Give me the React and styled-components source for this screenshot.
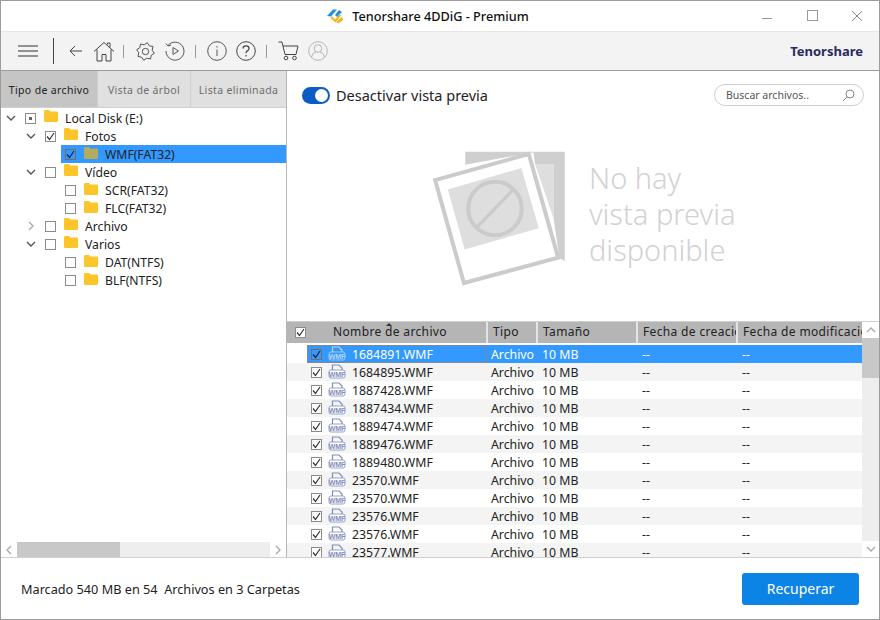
import styled, { createGlobalStyle } from 'styled-components';

const FONT = '"Noto Sans", "Open Sans", sans-serif';

const treeItems = [
  { label: 'Local Disk (E:)', level: 0, arrow: 'down', check: 'partial' },
  { label: 'Fotos', level: 1, arrow: 'down', check: 'on' },
  { label: 'WMF(FAT32)', level: 2, check: 'on', selected: true },
  { label: 'Vídeo', level: 1, arrow: 'down' },
  { label: 'SCR(FAT32)', level: 2 },
  { label: 'FLC(FAT32)', level: 2 },
  { label: 'Archivo', level: 1, arrow: 'right' },
  { label: 'Varios', level: 1, arrow: 'down' },
  { label: 'DAT(NTFS)', level: 2 },
  { label: 'BLF(NTFS)', level: 2 },
];

const files = [
  '1684891.WMF', '1684895.WMF', '1887428.WMF', '1887434.WMF', '1889474.WMF', '1889476.WMF',
  '1889480.WMF', '23570.WMF', '23570.WMF', '23576.WMF', '23576.WMF', '23577.WMF',
];

function Logo() {
  return (
    <svg width="18" height="18" viewBox="0 0 18 18" fill="none">
      <path d="M1 9 L7 2.5 L11 2.5 L5 9.5 Z" fill="#1f8fe0" />
      <path d="M9 8 L13 3 L16 5 L11 10 Z" fill="#1f8fe0" />
      <path d="M6 9 L9 12.5 L13 8 L15.5 8 L9.5 15.5 L4.5 11 Z" fill="#f7b21a" />
      <path d="M10 15.5 L16 9.5 L17 13 L13 16 Z" fill="#f7b21a" />
    </svg>
  );
}

function Icon({ w = 20, h = 20, box, color = '#444', children }) {
  return (
    <svg width={w} height={h} viewBox={box || `0 0 ${w} ${h}`} fill="none" stroke={color} strokeWidth="1">
      {children}
    </svg>
  );
}

function Gear() {
  // teeth drawn as one outline around the hub
  const pts = [];
  for (let i = 0; i < 16; i++) {
    const a = (i * Math.PI) / 8 + Math.PI / 16;
    const r = i % 2 === 0 ? 9 : 6.8;
    pts.push(`${(9.5 + r * Math.cos(a)).toFixed(1)},${(9.5 + r * Math.sin(a)).toFixed(1)}`);
  }
  return (
    <Icon w={19} h={19} color="#555">
      <polygon points={pts.join(' ')} strokeLinejoin="round" />
      <circle cx="9.5" cy="9.5" r="3.2" />
    </Icon>
  );
}

function FolderIcon({ dim }) {
  const color = dim ? '#b3ab5e' : '#fcc62a';
  return (
    <svg width="14" height="12" viewBox="0 0 14 12">
      <path d="M0 1.2 Q0 0 1.2 0 H5 L6.5 1.5 H13 Q14 1.5 14 2.6 V10.8 Q14 12 12.8 12 H1.2 Q0 12 0 10.8 Z" fill={color} />
    </svg>
  );
}

function Chevron({ dir, color = '#555' }) {
  const d = { down: 'M1 1 L5 5 L9 1', right: 'M1 1 L5 5 L1 9', up: 'M1 5 L5 1 L9 5', left: 'M5 1 L1 5 L5 9' }[dir];
  const flat = dir === 'down' || dir === 'up';
  return (
    <svg width={flat ? 10 : 6} height={flat ? 6 : 10} viewBox={flat ? '0 0 10 6' : '0 0 6 10'} fill="none" stroke={color} strokeWidth="1.4">
      <path d={d} />
    </svg>
  );
}

function CheckBox({ state, focus }) {
  return (
    <Box $focus={focus}>
      {state === 'on' && (
        <svg width="9" height="9" viewBox="0 0 9 9" fill="none" stroke={focus ? '#10233f' : '#333'} strokeWidth="1.2">
          <path d="M1 4.5 L3.5 7.5 L8 1" />
        </svg>
      )}
      {state === 'partial' && <PartialDot />}
    </Box>
  );
}

function WmfIcon({ light }) {
  const color = light ? '#b9d6f4' : '#7f8dbd';
  return (
    <svg width="18" height="16" viewBox="0 0 18 16">
      <path d="M4.5 6 V1 H11 L14 4 V6" fill="none" stroke={color} strokeWidth="1.2" />
      <rect x="1" y="6" width="16" height="8" rx="2" fill={light ? 'none' : '#fff'} stroke={color} strokeWidth="0.8" />
      <text x="9" y="12.6" textAnchor="middle" fontSize="7" fontWeight="700" fontFamily="Liberation Sans, sans-serif" fill={color}>WMF</text>
    </svg>
  );
}

function NoPreviewArt() {
  return (
    <svg width="134" height="137" viewBox="40 25 400 410" fill="none">
      <path d="M136 72 V33 H434 V360 L418 352 L400 230 V70 H345 L340 35 Z" fill="#cfcfcf" />
      <path d="M345 70 H400 V232 Z" fill="#dedede" />
      <path d="M46 118 L326 40 L414 350 L132 426 Z" fill="#fff" stroke="#cbcbcb" strokeWidth="12" />
      <path d="M84 146 L304 82 L356 262 L134 326 Z" fill="#dedede" />
      <circle cx="225" cy="203" r="80" stroke="#cbcbcb" strokeWidth="12" />
      <path d="M172 258 L278 148" stroke="#cbcbcb" strokeWidth="10" />
    </svg>
  );
}

export default function App() {
  return (
    <AppWindow>
      <GlobalStyle />
      <TitleBar>
        <TitleGroup>
          <Logo />
          <TitleText>Tenorshare 4DDiG - Premium</TitleText>
        </TitleGroup>
        <WindowButtons>
          <Icon w={12} h={12} color="#999"><path d="M1 8.5 H11" /></Icon>
          <Icon w={12} h={12} color="#999"><rect x="1.5" y="0.5" width="10" height="10" /></Icon>
          <Icon w={12} h={12} color="#888"><path d="M1 1 L11 11 M11 1 L1 11" /></Icon>
        </WindowButtons>
      </TitleBar>

      <Toolbar>
        <ToolGroup>
          <MenuButton>
            <Icon w={20} h={12} color="#333"><path d="M0 1 H20 M0 6 H20 M0 11 H20" /></Icon>
          </MenuButton>
          <TallDivider />
          <ToolSlot $w={16} $ml={14}>
            <Icon w={14} h={12} color="#444"><path d="M13 6 H1 M6 1 L1 6 L6 11" /></Icon>
          </ToolSlot>
          <ToolSlot $w={22} $ml={9}>
            <Icon w={22} h={21} color="#444">
              <path d="M1 10.5 L11 1.5 L21 10.5 M4 8.5 V20 H9 V13.5 H13 V20 H18 V8.5 M14.5 3.5 V2 H17 V6.5" strokeLinejoin="round" />
            </Icon>
          </ToolSlot>
          <ShortDivider $ml={8} />
          <ToolSlot $w={19} $ml={12}><Gear /></ToolSlot>
          <ToolSlot $w={20} $ml={10}>
            <Icon w={20} h={20} color="#555">
              <path d="M3 4.5 A9 9 0 1 1 1 10" />
              <path d="M1 2.5 L3 5 L6 4" />
              <path d="M8 6.5 L13.5 10 L8 13.5 Z" />
            </Icon>
          </ToolSlot>
          <ShortDivider $ml={10} />
          <ToolSlot $w={20} $ml={11}>
            <Icon w={20} h={20} color="#555">
              <circle cx="10" cy="10" r="9.3" />
              <path d="M10 8.5 V15 M10 5 V6.5" />
            </Icon>
          </ToolSlot>
          <ToolSlot $w={20} $ml={9}>
            <Icon w={20} h={20} color="#444">
              <circle cx="10" cy="10" r="9.3" />
              <path d="M7 7.5 Q7 4.8 10 4.8 Q13 4.8 13 7.4 Q13 9 11.3 9.9 Q10 10.6 10 12.3 M10 14 V15.5" strokeWidth="1.2" />
            </Icon>
          </ToolSlot>
          <ShortDivider $ml={10} />
          <ToolSlot $w={21} $ml={11}>
            <Icon w={21} h={20} color="#444">
              <path d="M0.5 1 H4 L7 13.5 H18 L20 5 H5" strokeLinejoin="round" />
              <circle cx="8" cy="17" r="1.8" />
              <circle cx="16.5" cy="17" r="1.8" />
            </Icon>
          </ToolSlot>
          <ToolSlot $w={20} $ml={9}>
            <Icon w={20} h={20} color="#b5b5b5">
              <circle cx="10" cy="10" r="9.3" />
              <circle cx="10" cy="7.5" r="3.8" />
              <path d="M3.5 16 Q4.5 11.5 8 11 M16.5 16 Q15.5 11.5 12 11" />
            </Icon>
          </ToolSlot>
        </ToolGroup>
        <Brand>Tenorshare</Brand>
      </Toolbar>

      <Main>
        <LeftPane>
          <Tabs>
            <Tab $active $w={97}>Tipo de archivo</Tab>
            <Tab $w={93}>Vista de árbol</Tab>
            <Tab $w={95}>Lista eliminada</Tab>
          </Tabs>
          <Tree>
            {treeItems.map(item => (
              <TreeRow key={item.label} $level={item.level} $selected={item.selected}>
                <Arrow>
                  {item.arrow && <Chevron dir={item.arrow} color={item.arrow === 'right' ? '#aaa' : '#555'} />}
                </Arrow>
                <CheckBox state={item.check} focus={item.selected} />
                <FolderSlot $raised={item.level < 2}><FolderIcon dim={item.selected} /></FolderSlot>
                <TreeLabel>{item.label}</TreeLabel>
              </TreeRow>
            ))}
          </Tree>
          <HScrollbar>
            <ScrollButton $w={16}><Chevron dir="left" color="#aaa" /></ScrollButton>
            <HThumb />
            <ScrollButton $w={16}><Chevron dir="right" color="#aaa" /></ScrollButton>
          </HScrollbar>
        </LeftPane>

        <RightPane>
          <PreviewBar>
            <ToggleGroup>
              <Toggle><Knob /></Toggle>
              <ToggleLabel>Desactivar vista previa</ToggleLabel>
            </ToggleGroup>
            <SearchBox>
              <SearchHint>Buscar archivos..</SearchHint>
              <Icon w={13} h={13} color="#888">
                <circle cx="8" cy="5" r="4" />
                <path d="M5 8 L1 12" />
              </Icon>
            </SearchBox>
          </PreviewBar>
          <PreviewArea>
            <NoPreviewArt />
            <NoPreviewText>No hay<br />vista previa<br />disponible</NoPreviewText>
          </PreviewArea>

          <TableWrap>
            <TableBody>
              <HeaderRow>
                <HeaderCheck><CheckBox state="on" /></HeaderCheck>
                <HeaderCell>
                  <NameHeader>Nombre de archivo</NameHeader>
                  <SortMark />
                </HeaderCell>
                <HeaderCell>Tipo</HeaderCell>
                <HeaderCell>Tamaño</HeaderCell>
                <HeaderCell>Fecha de creación</HeaderCell>
                <HeaderCell>Fecha de modificación</HeaderCell>
              </HeaderRow>
              {files.map((name, i) => (
                <FileRow key={i} $selected={i === 0} $odd={i % 2 === 1}>
                  <Gutter />
                  <NameCell $selected={i === 0}>
                    <CheckBox state="on" focus={i === 0} />
                    <WmfIcon light={i === 0} />
                    <FileName>{name}</FileName>
                  </NameCell>
                  <Cell>Archivo</Cell>
                  <Cell $pad={4}>10 MB</Cell>
                  <Cell $pad={4}>--</Cell>
                  <Cell $pad={4}>--</Cell>
                </FileRow>
              ))}
            </TableBody>
            <VScrollbar>
              <ScrollButton $h={16}><Chevron dir="up" color="#aaa" /></ScrollButton>
              <VThumb />
              <VTrack />
              <ScrollButton $h={16}><Chevron dir="down" color="#aaa" /></ScrollButton>
            </VScrollbar>
          </TableWrap>
        </RightPane>
      </Main>

      <Footer>
        <Summary>Marcado 540 MB en 54&nbsp; Archivos en 3 Carpetas</Summary>
        <RecoverButton>Recuperar</RecoverButton>
      </Footer>
    </AppWindow>
  );
}

const GlobalStyle = createGlobalStyle`
  html, body {
    margin: 0;
    background: #fff;
    font-family: ${FONT};
  }
  * { box-sizing: border-box; }
`;

const AppWindow = styled.div`
  width: 880px;
  height: 620px;
  border: 1px solid #9c9c9c;
  display: flex;
  flex-direction: column;
  overflow: hidden;
  color: #222;
`;

const TitleBar = styled.div`
  height: 31px;
  flex: none;
  background: #fff;
  border-bottom: 1px solid #e6e6e6;
  position: relative;
  display: flex;
  align-items: center;
  justify-content: center;
`;

const TitleGroup = styled.div`
  display: flex;
  align-items: center;
  gap: 8px;
  margin-left: -25px;
`;

const TitleText = styled.div`
  font-size: 12.7px;
  font-weight: 500;
  color: #111;
`;

const WindowButtons = styled.div`
  position: absolute;
  right: 16px;
  top: 9px;
  display: flex;
  gap: 33px;
`;

const Toolbar = styled.div`
  height: 39px;
  flex: none;
  background: #f3f3f3;
  border-bottom: 1px solid #9c9c9c;
  display: flex;
  align-items: center;
  justify-content: space-between;
  padding: 0 16px 0 17px;
`;

const ToolGroup = styled.div`
  display: flex;
  align-items: center;
`;

const MenuButton = styled.div`
  width: 20px;
  display: flex;
`;

const TallDivider = styled.div`
  width: 1px;
  height: 26px;
  background: #444;
  margin-left: 15px;
`;

const ShortDivider = styled.div`
  width: 1px;
  height: 13px;
  background: #999;
  margin-left: ${p => p.$ml}px;
`;

const ToolSlot = styled.div`
  width: ${p => p.$w}px;
  margin-left: ${p => p.$ml}px;
  display: flex;
  justify-content: center;
`;

const Brand = styled.div`
  font-size: 13px;
  font-weight: 700;
  color: #2b2a5e;
`;

const Main = styled.div`
  flex: 1;
  min-height: 0;
  display: flex;
`;

const LeftPane = styled.div`
  width: 286px;
  flex: none;
  border-right: 1px solid #b5b5b5;
  border-bottom: 1px solid #d0d0d0;
  display: flex;
  flex-direction: column;
`;

const Tabs = styled.div`
  display: flex;
  height: 37px;
  flex: none;
  border-bottom: 1px solid #d0d0d0;
`;

const Tab = styled.div`
  width: ${p => p.$w}px;
  background: ${p => (p.$active ? '#c5c5c5' : '#e0e0e0')};
  border-right: 1px solid #cfcfcf;
  color: ${p => (p.$active ? '#222' : '#6e6e6e')};
  font-size: 10.5px;
  letter-spacing: 0.35px;
  padding-top: 2px;
  display: flex;
  align-items: center;
  justify-content: center;
  &:last-child { border-right: none; }
`;

const Tree = styled.div`
  flex: 1;
  padding-top: 1px;
`;

const TreeRow = styled.div`
  height: 18px;
  display: flex;
  align-items: center;
  padding-left: ${p => 4 + p.$level * 20}px;
  background: ${p => (p.$selected ? 'linear-gradient(90deg, #fff 60px, #3399ff 60px)' : 'transparent')};
`;

const Arrow = styled.div`
  width: 20px;
  height: 10px;
  display: flex;
  align-items: center;
  justify-content: center;
  padding-right: 8px;
  flex: none;
`;

const Box = styled.div`
  width: 11px;
  height: 11px;
  flex: none;
  background: ${p => (p.$focus ? 'transparent' : '#fff')};
  border: 1px solid ${p => (p.$focus ? '#7d6a5c' : '#8c8c8c')};
  display: flex;
  align-items: center;
  justify-content: center;
`;

const PartialDot = styled.div`
  width: 3px;
  height: 3px;
  background: #666;
`;

const FolderSlot = styled.div`
  margin-left: 8px;
  width: 14px;
  display: flex;
  position: relative;
  top: ${p => (p.$raised ? -2 : -1)}px;
`;

const TreeLabel = styled.span`
  margin-left: 7px;
  font-size: 12.2px;
  color: #222;
  white-space: nowrap;
`;

const HScrollbar = styled.div`
  height: 15px;
  flex: none;
  background: #eeeeee;
  display: flex;
  justify-content: space-between;
  position: relative;
`;

const HThumb = styled.div`
  position: absolute;
  left: 16px;
  top: 0;
  width: 103px;
  height: 15px;
  background: #c8c8c8;
`;

const ScrollButton = styled.div`
  width: ${p => (p.$w ? `${p.$w}px` : '100%')};
  height: ${p => (p.$h ? `${p.$h}px` : '100%')};
  flex: none;
  background: #fff;
  display: flex;
  align-items: center;
  justify-content: center;
`;

const RightPane = styled.div`
  flex: 1;
  min-width: 0;
  display: flex;
  flex-direction: column;
`;

const PreviewBar = styled.div`
  height: 48px;
  flex: none;
  display: flex;
  align-items: center;
  justify-content: space-between;
  padding: 0 15px;
`;

const ToggleGroup = styled.div`
  display: flex;
  align-items: center;
  gap: 6px;
`;

const Toggle = styled.div`
  width: 28px;
  height: 17px;
  border-radius: 9px;
  background: #0b5cc4;
  position: relative;
`;

const Knob = styled.div`
  position: absolute;
  right: 2px;
  top: 2px;
  width: 13px;
  height: 13px;
  border-radius: 50%;
  background: #fff;
`;

const ToggleLabel = styled.span`
  font-size: 14.5px;
  color: #222;
`;

const SearchBox = styled.div`
  width: 150px;
  height: 22px;
  border: 1px solid #cfcfcf;
  border-radius: 11px;
  padding: 0 8px 0 11px;
  display: flex;
  align-items: center;
  justify-content: space-between;
`;

const SearchHint = styled.span`
  font-size: 10.5px;
  color: #555;
`;

const PreviewArea = styled.div`
  flex: 1;
  min-height: 0;
  display: flex;
  align-items: flex-start;
  padding: 30px 0 0 146px;
  gap: 22px;
`;

const NoPreviewText = styled.div`
  font-size: 29px;
  line-height: 36px;
  font-weight: 300;
  color: #d2d2d2;
  margin-top: 11px;
  white-space: nowrap;
`;

const TableWrap = styled.div`
  height: 237px;
  flex: none;
  display: flex;
  border-top: 1px solid #cfcfcf;
  border-bottom: 1px solid #d0d0d0;
  overflow: hidden;
`;

const TableBody = styled.div`
  flex: 1;
  min-width: 0;
  overflow: hidden;
`;

const HeaderRow = styled.div`
  height: 23px;
  display: grid;
  grid-template-columns: 45px 156px 50px 100px 100px 124px;
  background: #b5b5b5;
  border-bottom: 2px solid #fff;
  font-size: 12px;
  color: #222;
`;

const HeaderCheck = styled.div`
  display: flex;
  align-items: center;
  padding-left: 8px;
`;

const HeaderCell = styled.div`
  position: relative;
  display: flex;
  align-items: center;
  padding: 0 0 2px 5px;
  border-right: 2px solid #e4e4e4;
  overflow: hidden;
  white-space: nowrap;
  letter-spacing: 0.35px;
  &:last-child { border-right: none; }
  &:nth-child(2) { padding-left: 1px; }
`;

const NameHeader = styled.span``;

const SortMark = styled.div`
  position: absolute;
  left: 54px;
  top: 1px;
  width: 0;
  height: 0;
  border-left: 3px solid transparent;
  border-right: 3px solid transparent;
  border-bottom: 3px solid #333;
`;

const FileRow = styled.div`
  height: 18px;
  display: grid;
  grid-template-columns: 20px 181px 50px 100px 100px 124px;
  align-items: center;
  background: ${p => (p.$selected ? 'linear-gradient(90deg, #fff 20px, #3399ff 20px)' : p.$odd ? '#f4f4f4' : '#fff')};
  color: ${p => (p.$selected ? '#fff' : '#222')};
  font-size: 12.3px;
`;

const Gutter = styled.div``;

const NameCell = styled.div`
  height: 18px;
  display: flex;
  align-items: center;
  padding-left: 4px;
  gap: 6px;
  outline: ${p => (p.$selected ? '1px dotted #c87a2a' : 'none')};
  outline-offset: -1px;
`;

const FileName = styled.span`
  margin-left: 0;
  white-space: nowrap;
`;

const Cell = styled.div`
  padding-left: ${p => p.$pad ?? 3}px;
  white-space: nowrap;
`;

const VScrollbar = styled.div`
  width: 17px;
  flex: none;
  display: flex;
  flex-direction: column;
  background: #eee;
`;

const VThumb = styled.div`
  height: 40px;
  flex: none;
  background: #c8c8c8;
`;

const VTrack = styled.div`
  flex: 1;
`;

const Footer = styled.div`
  height: 61px;
  flex: none;
  display: flex;
  align-items: center;
  justify-content: space-between;
  padding: 0 20px;
`;

const Summary = styled.div`
  font-size: 12.7px;
  color: #222;
`;

const RecoverButton = styled.button`
  width: 117px;
  height: 32px;
  border: none;
  border-radius: 3px;
  background: #0c84e6;
  color: #fff;
  font-family: ${FONT};
  font-size: 14px;
`;
